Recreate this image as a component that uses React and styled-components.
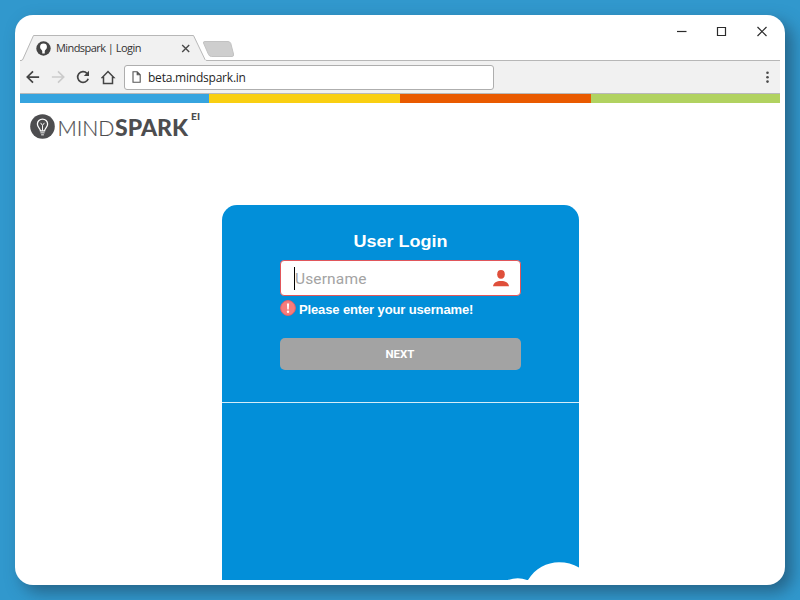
import React from 'react';
import styled, { createGlobalStyle } from 'styled-components';

const GlobalStyle = createGlobalStyle`
  * { box-sizing: border-box; }
  body { margin: 0; background: #3198cd; overflow: hidden; }
  svg { display: block; flex: none; }
`;

const Desktop = styled.main`
  width: 800px;
  height: 600px;
  padding: 15px;
  background: #3198cd;
  overflow: hidden;
`;

const Window = styled.section`
  width: 770px;
  height: 570px;
  padding: 0 5px 5px;
  border-radius: 18px;
  background: #fff;
  box-shadow: 7px 7px 16px rgba(30, 65, 90, 0.6);
  display: flex;
  flex-direction: column;
`;

const TitleBar = styled.header`
  height: 46px;
  flex: none;
  display: flex;
  align-items: flex-end;
  position: relative;
`;

const TabStrip = styled.svg`
  position: absolute;
  left: 0;
  bottom: 0;
`;

const Tab = styled.div`
  position: relative;
  height: 26px;
  width: 190px;
  padding: 0 19px 0 16px;
  display: flex;
  align-items: center;
`;

const TabTitle = styled.span`
  margin-left: 5px;
  flex: 1;
  font: 11px/16px 'Open Sans', sans-serif;
  letter-spacing: -0.57px;
  word-spacing: 0.2px;
  color: #333;
  white-space: nowrap;
`;

const WindowControls = styled.div`
  align-self: flex-start;
  margin: 10px 12px 0 auto;
  display: flex;
  gap: 28px;
`;

const Toolbar = styled.nav`
  height: 33px;
  flex: none;
  padding: 0 9px 0 6px;
  background: #f1f1f1;
  border-bottom: 1px solid #b9b9b9;
  display: flex;
  align-items: center;
`;

const NavButtons = styled.div`
  display: flex;
  align-items: center;
  gap: 11px;
  width: 98px;
`;

const AddressBar = styled.div`
  width: 370px;
  height: 25px;
  margin-right: auto;
  padding-left: 7px;
  border: 1px solid #aeaeae;
  border-radius: 3px;
  background: #fff;
  display: flex;
  align-items: center;
  gap: 7px;
`;

const Address = styled.span`
  padding-top: 1px;
  font: 12px/18px 'Open Sans', sans-serif;
  letter-spacing: -0.22px;
  color: #1f1f1f;
`;

const Stripe = styled.div`
  height: 9px;
  flex: none;
  display: grid;
  grid-template-columns: 189px 191px 191px 1fr;
`;

const Band = styled.span`
  background: ${(p) => p.$color};
`;

const Page = styled.div`
  flex: 1;
  min-height: 0;
  display: flex;
  flex-direction: column;
  overflow: hidden;
`;

const Brand = styled.div`
  height: 102px;
  flex: none;
  padding: 6px 0 0 10px;
  display: flex;
  align-items: flex-start;
`;

const BrandMark = styled.svg`
  margin-top: 5px;
`;

const Wordmark = styled.svg`
  margin-left: 3px;
`;

const Card = styled.section`
  width: 357px;
  flex: 1;
  margin-left: 202px;
  border-radius: 15px 15px 0 0;
  background: #028fd9;
  position: relative;
  overflow: hidden;
`;

const LoginForm = styled.div`
  height: 198px;
  padding: 25px 58px 0;
  border-bottom: 1px solid #d5ecf8;
  display: flex;
  flex-direction: column;
`;

const Heading = styled.h1`
  margin: 0;
  height: 30px;
  font: bold 17px/24px 'Liberation Sans', sans-serif;
  text-align: center;
  color: #fff;
  transform: scaleX(1.06);
`;

const Field = styled.div`
  height: 36px;
  padding: 0 11px 0 13px;
  border: 1px solid #e0565b;
  border-radius: 4px;
  background: #fff;
  display: flex;
  align-items: center;
  justify-content: space-between;
`;

const Placeholder = styled.span`
  border-left: 1px solid #000;
  font: 400 15.5px/22px Roboto, sans-serif;
  padding-top: 1px;
  letter-spacing: 0.15px;
  color: #a3a3a3;
`;

const ErrorRow = styled.div`
  height: 42px;
  padding-top: 4px;
  display: flex;
  gap: 3px;
`;

const ErrorText = styled.span`
  font: bold 13px/19px 'Liberation Sans', sans-serif;
  letter-spacing: -0.13px;
  color: #fff;
  white-space: nowrap;
`;

const NextButton = styled.button`
  height: 32px;
  padding: 0 1px 1px 0;
  border: 0;
  border-radius: 5px;
  background: #a3a3a3;
  font: bold 11.5px/16px Roboto, sans-serif;
  color: #fff;
`;

const Clouds = styled.svg`
  position: absolute;
  right: 0;
  bottom: 0;
`;

const Bulb = () => (
  <>
    <circle cx="12" cy="12" r="11.800" fill="#4d4d4f" />
    <path
      d="M10 16.200c0-2.200-2.900-3.300-2.900-6.500a4.900 4.900 0 0 1 9.800 0c0 3.200-2.900 4.300-2.900 6.500z"
      fill="none"
      stroke="#fff"
      strokeWidth="1.2"
    />
    <path
      d="M12 16v-5l-1.800-2.500M12 11l1.800-2.500M10 18.100h4M10.700 20h2.600"
      fill="none"
      stroke="#fff"
      strokeWidth="0.9"
    />
  </>
);

const Favicon = () => (
  <svg width="15" height="15" viewBox="0 0 24 24">
    <circle cx="12" cy="12" r="11.500" fill="#444" />
    <path d="M10 16.500c0-2.500-3.500-3.300-3.500-7a5.500 5.500 0 0 1 11 0c0 3.700-3.500 4.500-3.500 7zM10 16.500h4v3.500h-4z" fill="#fff" />
  </svg>
);

const Stroke = ({ size = 16, color = '#444', width = 1.8, d }) => (
  <svg width={size} height={size} viewBox="0 0 16 16" fill="none" stroke={color} strokeWidth={width}>
    <path d={d} />
  </svg>
);

const ControlIcon = ({ d }) => (
  <svg width="12" height="13" viewBox="0 0 12 13" fill="none" stroke="#2b2b2b" strokeWidth="1.2">
    <path d={d} />
  </svg>
);

export default function App() {
  return (
    <Desktop>
      <GlobalStyle />
      <Window>
        <TitleBar>
          <TabStrip width="760" height="26" viewBox="0 0 760 26">
            <path d="M0 26L2.500 24.500 13.500 .5H173.500L185.500 26z" fill="#f1f1f1" />
            <path d="M0 25.500H1Q2.500 25.500 3 24L13.500 .5H173.500L185 24.500Q185.500 25.500 187 25.500H760" fill="none" stroke="#b7b7b7" />
            <path
              d="M185 6.500H208Q210 6.500 210.800 8.500L213.500 19Q214 21.500 212 21.500H191.500Q189.500 21.500 188.500 19.500L183.500 8Q183 6.500 185 6.500z"
              fill="#cecece"
              stroke="#c2c2c2"
            />
          </TabStrip>
          <Tab>
            <Favicon />
            <TabTitle>Mindspark | Login</TabTitle>
            <svg width="10" height="10" viewBox="0 0 10 10" stroke="#4a4a4a" strokeWidth="1.4">
              <path d="M1.200 2l7 7M8.200 2l-7 7" />
            </svg>
          </Tab>
          <WindowControls>
            <ControlIcon d="M1 6.500H10.500" />
            <ControlIcon d="M1.500 2.500H9.500V10.500H1.500z" />
            <ControlIcon d="M1.500 2L10.500 11M10.500 2L1.500 11" />
          </WindowControls>
        </TitleBar>

        <Toolbar>
          <NavButtons>
            <Stroke size={14} width={2} d="M15 8H2M8 1.500L1.500 8L8 14.500" />
            <Stroke size={14} width={1.9} color="#cbcbcb" d="M1 8H14M8 1.500L14.500 8L8 14.500" />
            <svg width="14" height="14" viewBox="0 0 14 14">
              <path d="M12.200 8.700A5.400 5.400 0 1 1 11 3.300" fill="none" stroke="#444" strokeWidth="1.7" />
              <path d="M13 .8V6H7.800z" fill="#444" />
            </svg>
            <svg width="15" height="15" viewBox="0 0 15 15" fill="none" stroke="#444" strokeWidth="1.500">
              <path d="M2.500 7.500H1.200L7 1.500L12.800 7.500H11.500V13.500H2.500z" />
            </svg>
          </NavButtons>
          <AddressBar>
            <svg width="9" height="12" viewBox="0 0 9 12" fill="none" stroke="#555" strokeWidth="1.1">
              <path d="M1 .8H5.200L8.200 3.800V11.200H1zM5.200 .8V3.800H8.200" />
            </svg>
            <Address>beta.mindspark.in</Address>
          </AddressBar>
          <svg width="7" height="14" viewBox="0 0 7 14" fill="#4a4a4a">
            <circle cx="3.500" cy="2.800" r="1.300" />
            <circle cx="3.500" cy="7.200" r="1.300" />
            <circle cx="3.500" cy="11.600" r="1.300" />
          </svg>
        </Toolbar>

        <Stripe>
          <Band $color="#36a4df" />
          <Band $color="#f9cf12" />
          <Band $color="#e95a00" />
          <Band $color="#b1d260" />
        </Stripe>

        <Page>
          <Brand>
            <BrandMark width="25" height="25" viewBox="0 0 24 24">
              <Bulb />
            </BrandMark>
            <Wordmark width="148" height="32" viewBox="0 0 148 32" fill="#4d4d4f" fontFamily="Lato, sans-serif">
              <text x="-0.500" y="27" fontWeight="300" fontSize="22" stroke="#4d4d4f" strokeWidth="0.2" textLength="57" lengthAdjust="spacingAndGlyphs">
                MIND
              </text>
              <text x="57" y="27" fontWeight="900" fontSize="22" textLength="73" lengthAdjust="spacingAndGlyphs">
                SPARK
              </text>
              <text x="133" y="10.500" fontWeight="900" fontSize="8.500" textLength="9" lengthAdjust="spacingAndGlyphs">
                EI
              </text>
            </Wordmark>
          </Brand>

          <Card>
            <LoginForm>
              <Heading>User Login</Heading>
              <Field>
                <Placeholder>Username</Placeholder>
                <svg width="16" height="18" viewBox="0 0 16 18" fill="#df4f3b">
                  <ellipse cx="8" cy="5.300" rx="3.800" ry="4.400" />
                  <path d="M0 17.200C.5 13.700 3.500 12 8 12S15.500 13.700 16 17.200z" />
                </svg>
              </Field>
              <ErrorRow>
                <svg width="16" height="16" viewBox="0 0 16 16">
                  <circle cx="8" cy="8" r="7.400" fill="#f67c7c" stroke="#e46067" />
                  <path d="M6.900 3.500H9.100L8.700 9.400H7.300z" fill="#fff" />
                  <circle cx="8" cy="11.800" r="1.200" fill="#fff" />
                </svg>
                <ErrorText>Please enter your username!</ErrorText>
              </ErrorRow>
              <NextButton>NEXT</NextButton>
            </LoginForm>
            <Clouds width="74" height="18" viewBox="0 0 74 18" fill="#fff">
              <path d="M3 18Q13 14.500 22 18H23C30 6.500 42 .3 54 .3Q65 .3 74 5.500V18z" />
            </Clouds>
          </Card>
        </Page>
      </Window>
    </Desktop>
  );
}
